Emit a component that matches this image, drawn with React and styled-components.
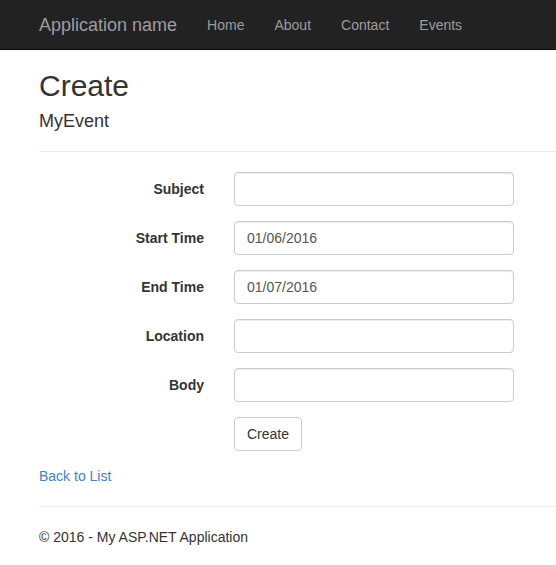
import styled, { createGlobalStyle } from "styled-components"

const GlobalStyle = createGlobalStyle`
  html, body {
    margin: 0;
    padding: 0;
    background: #fff;
  }
  body {
    font-family: "Liberation Sans", Arial, Helvetica, sans-serif;
    font-size: 14px;
    line-height: 20px;
    color: #333;
  }
  * {
    box-sizing: border-box;
  }
`

const Navbar = styled.nav`
  height: 50px;
  background: #222;
  border-bottom: 1px solid #080808;
  display: flex;
  align-items: stretch;
  padding-left: 24px;
`
const Brand = styled.a`
  padding: 15px;
  font-size: 18px;
  line-height: 20px;
  color: #9d9d9d;
  text-decoration: none;
`
const NavList = styled.ul`
  display: flex;
  list-style: none;
  margin: 0;
  padding: 0;
`
const NavLink = styled.a`
  display: block;
  padding: 15px;
  line-height: 20px;
  color: #9d9d9d;
  text-decoration: none;
`

const Content = styled.main`
  padding: 19px 0 0 39px;
`
const Title = styled.h2`
  margin: 0 0 10px;
  font-size: 30px;
  font-weight: 500;
  line-height: 1.1;
`
const Subtitle = styled.h4`
  margin: 0 0 19px;
  font-size: 18px;
  font-weight: 500;
  line-height: 1.1;
`
const Rule = styled.hr`
  margin: 0 0 20px;
  border: 0;
  border-top: 1px solid #eee;
  height: 0;
`
const Form = styled.form`
  display: flex;
  flex-direction: column;
  gap: 15px;
  margin-bottom: 15px;
`
const Group = styled.div`
  display: grid;
  grid-template-columns: 165px 280px;
  column-gap: 30px;
`
const Label = styled.label`
  padding-top: 7px;
  text-align: right;
  font-weight: 700;
  line-height: 20px;
`
const Input = styled.input`
  width: 280px;
  height: 34px;
  padding: 6px 12px;
  font-family: inherit;
  font-size: 14px;
  line-height: 20px;
  color: #555;
  background: #fff;
  border: 1px solid #ccc;
  border-radius: 4px;
  box-shadow: inset 0 1px 1px rgba(0, 0, 0, 0.075);
  outline: none;
`
const Button = styled.button`
  justify-self: start;
  height: 34px;
  padding: 6px 12px;
  font-family: inherit;
  font-size: 14px;
  line-height: 20px;
  color: #333;
  background: #fff;
  border: 1px solid #ccc;
  border-radius: 4px;
`
const BackLink = styled.a`
  display: block;
  margin-bottom: 20px;
  color: #3f83c8;
  text-decoration: none;
`
const Footer = styled.footer`
  p {
    margin: 0;
  }
`

const fields = [
  { label: "Subject", value: "" },
  { label: "Start Time", value: "01/06/2016" },
  { label: "End Time", value: "01/07/2016" },
  { label: "Location", value: "" },
  { label: "Body", value: "" },
]

const App = () => (
  <>
    <GlobalStyle />
    <Navbar>
      <Brand href="#">Application name</Brand>
      <NavList>
        {["Home", "About", "Contact", "Events"].map((item) => (
          <li key={item}>
            <NavLink href="#">{item}</NavLink>
          </li>
        ))}
      </NavList>
    </Navbar>
    <Content>
      <Title>Create</Title>
      <Subtitle>MyEvent</Subtitle>
      <Rule />
      <Form onSubmit={(e) => e.preventDefault()}>
        {fields.map((f) => (
          <Group key={f.label}>
            <Label>{f.label}</Label>
            <Input defaultValue={f.value} />
          </Group>
        ))}
        <Group>
          <div />
          <Button type="submit">Create</Button>
        </Group>
      </Form>
      <BackLink href="#">Back to List</BackLink>
      <Rule />
      <Footer>
        <p>© 2016 - My ASP.NET Application</p>
      </Footer>
    </Content>
  </>
)

export default App
